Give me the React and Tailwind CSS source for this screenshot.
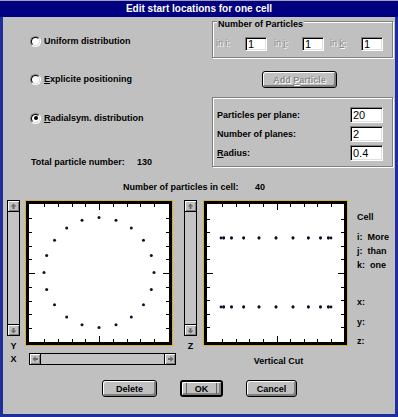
import React from "react";

function ticks(W, H, cx, cy, s) {
  const out = [];
  for (let k = -4; k <= 4; k++) {
    const len = k === 0 ? 6 : 3;
    const x = Math.round(cx + k * s) + 0.5;
    const y = Math.round(cy + k * s) + 0.5;
    out.push(<line key={"t" + k} x1={x} y1={0} x2={x} y2={len} />);
    out.push(<line key={"b" + k} x1={x} y1={H - len} x2={x} y2={H} />);
    out.push(<line key={"l" + k} x1={0} y1={y} x2={len} y2={y} />);
    out.push(<line key={"r" + k} x1={W - len} y1={y} x2={W} y2={y} />);
  }
  return out;
}

function Plot({ outer, W, H, cx, cy, s, children }) {
  return (
    <div className={"border border-[#d8b038] " + outer}>
      <div className="border-[3px] border-black bg-white w-full h-full">
        <svg width={W} height={H} className="block">
          <g stroke="#000" strokeWidth="1" shapeRendering="crispEdges">
            {ticks(W, H, cx, cy, s)}
          </g>
          {children}
        </svg>
      </div>
    </div>
  );
}

function Radio({ checked, children, className }) {
  return (
    <div className={"flex items-center h-[12px] " + className}>
      <div className="w-[11px] h-[11px] rounded-full border border-t-[#808080] border-l-[#808080] border-r-white border-b-white flex items-center justify-center shrink-0">
        <div className="w-[9px] h-[9px] rounded-full border border-t-black border-l-black border-r-[#dfdfdf] border-b-[#dfdfdf] bg-white flex items-center justify-center">
          {checked && <div className="w-[4px] h-[4px] rounded-full bg-black" />}
        </div>
      </div>
      <span className="ml-[3px] leading-[12px]">{children}</span>
    </div>
  );
}

function Field({ className, children }) {
  return (
    <div
      className={
        "bg-white border border-t-[#808080] border-l-[#808080] border-r-white border-b-white shadow-[inset_1px_1px_0_#000,inset_-1px_-1px_0_#dfdfdf] flex items-center pl-[2px] text-[11px] font-normal leading-[11px] text-black " +
        className
      }
    >
      {children}
    </div>
  );
}

function Button({ className, children, def }) {
  return (
    <div
      className={
        (def ? "border-2 " : "border ") +
        "border-black rounded-[3px] bg-[#c0c0c0] shadow-[inset_1px_1px_0_#fff,inset_-2px_-2px_0_#808080] flex items-center justify-center leading-[10px] " +
        className
      }
    >
      <span>{children}</span>
    </div>
  );
}

function Arrow({ dir }) {
  const d = {
    up: "M5.5 2.5 L8.5 5.5 L6.5 5.5 L6.5 8 L4.5 8 L4.5 5.5 L2.5 5.5 Z",
    down: "M5.5 8.5 L8.5 5.5 L6.5 5.5 L6.5 3 L4.5 3 L4.5 5.5 L2.5 5.5 Z",
    left: "M2.5 5 L5.5 2 L5.5 4 L8 4 L8 6 L5.5 6 L5.5 8 Z",
    right: "M8.5 5 L5.5 2 L5.5 4 L3 4 L3 6 L5.5 6 L5.5 8 Z",
  }[dir];
  return (
    <svg width="11" height="11" className="block">
      <path d={d} fill="#6a6a6a" />
    </svg>
  );
}

function VScroll() {
  return (
    <div className="w-[13px] h-[136px] border border-black bg-[#c4c4c4] flex flex-col justify-between">
      <div className="h-[11px] border-b border-black bg-[#c0c0c0] shadow-[inset_1px_1px_0_#fff,inset_-1px_-1px_0_#808080] flex items-center justify-center overflow-hidden">
        <Arrow dir="up" />
      </div>
      <div className="h-[11px] border-t border-black bg-[#c0c0c0] shadow-[inset_1px_1px_0_#fff,inset_-1px_-1px_0_#808080] flex items-center justify-center overflow-hidden">
        <Arrow dir="down" />
      </div>
    </div>
  );
}

function HScroll() {
  return (
    <div className="w-[147px] h-[12px] border border-black bg-[#c4c4c4] flex justify-between">
      <div className="w-[11px] border-r border-black bg-[#c0c0c0] shadow-[inset_1px_1px_0_#fff,inset_-1px_-1px_0_#808080] flex items-center justify-center overflow-hidden">
        <Arrow dir="left" />
      </div>
      <div className="w-[11px] border-l border-black bg-[#c0c0c0] shadow-[inset_1px_1px_0_#fff,inset_-1px_-1px_0_#808080] flex items-center justify-center overflow-hidden">
        <Arrow dir="right" />
      </div>
    </div>
  );
}

export default function App() {
  const pts = [];
  for (let k = 0; k < 20; k++) {
    const a = (k * 18 * Math.PI) / 180;
    pts.push([Math.sin(a), Math.cos(a)]);
  }
  return (
    <div className="w-[398px] h-[417px] bg-[#1e2f9a] flex flex-col font-['Liberation_Sans',Arial,sans-serif] text-[9px] font-bold text-black">
      <div className="h-[17px] bg-[#000080] border-t border-[#a0a0b0] flex items-center justify-center text-white text-[10px] font-bold leading-[12px]">
        Edit start locations for one cell
      </div>
      <div className="flex-1 bg-[#c0c0c0] ml-[3px] mr-[3px] mb-[3px] flex flex-col">
        {/* top section */}
        <div className="flex h-[151px]">
          <div className="w-[209px] pl-[27px] pt-[18px] flex flex-col">
            <Radio>Uniform distribution</Radio>
            <Radio className="mt-[26px]">
              <u>E</u>xplicite positioning
            </Radio>
            <Radio className="mt-[27px]" checked>
              <u>R</u>adialsym. distribution
            </Radio>
            <div className="mt-[32px] ml-[1px] flex h-[12px] items-center leading-[12px]">
              <span className="w-[106px]">Total particle number:</span>
              <span>130</span>
            </div>
          </div>
          <div className="w-[181px] pt-[4px] flex flex-col">
            <div className="h-[37px] border border-[#808080] shadow-[inset_1px_1px_0_#fff,1px_1px_0_#fff] flex flex-col">
              <div className="-mt-[3px] ml-[4px] w-fit bg-[#c0c0c0] px-[1px] leading-[10px]">
                Number of Particles
              </div>
              <div className="mt-[8px] pl-[3px] flex items-center text-[#8a8a8a] font-normal [text-shadow:1px_1px_0_#fff]">
                <span className="w-[29px]">in i:</span>
                <Field className="w-[22px] h-[14px]">1</Field>
                <span className="ml-[7px] w-[28px]">
                  in <u>j</u>:
                </span>
                <Field className="w-[22px] h-[14px]">1</Field>
                <span className="ml-[6px] w-[31px]">
                  in <u>k</u>:
                </span>
                <Field className="w-[22px] h-[14px]">1</Field>
              </div>
            </div>
            <Button className="mt-[13px] ml-[50px] w-[75px] h-[17px] text-[#8a8a8a] [text-shadow:1px_1px_0_#fff]">
              Add <u>P</u>article
            </Button>
            <div className="mt-[9px] h-[70px] border border-[#808080] shadow-[inset_1px_1px_0_#fff,1px_1px_0_#fff] pt-[9px] pl-[4px] pr-[9px] flex flex-col gap-[3px]">
              <div className="flex items-center justify-between h-[16px]">
                <span className="mt-[2px]">Particles per plane:</span>
                <Field className="w-[33px] h-[16px]">20</Field>
              </div>
              <div className="flex items-center justify-between h-[16px]">
                <span className="mt-[2px]">Number of planes:</span>
                <Field className="w-[33px] h-[16px]">2</Field>
              </div>
              <div className="flex items-center justify-between h-[16px]">
                <span className="mt-[2px]">
                  <u>R</u>adius:
                </span>
                <Field className="w-[33px] h-[16px]">0.4</Field>
              </div>
            </div>
          </div>
        </div>

        {/* particles in cell */}
        <div className="mt-[13px] h-[12px] pl-[120px] flex items-center leading-[12px]">
          <span className="w-[132px]">Number of particles in cell:</span>
          <span>40</span>
        </div>

        {/* plot row */}
        <div className="mt-[7px] h-[153px] flex items-start">
          <div className="ml-[4px] w-[13px] flex flex-col items-center">
            <VScroll />
            <span className="mt-[5px] leading-[10px]">Y</span>
          </div>
          <Plot outer="ml-[5px] w-[148px] h-[146px]" W={140} H={138} cx={70} cy={69} s={13.75}>
            {pts.map(([sx, cy], i) => (
              <circle key={i} cx={70 + 55 * sx} cy={68.5 - 55 * cy} r="1.5" fill="#101028" />
            ))}
          </Plot>
          <div className="ml-[11px] w-[13px] flex flex-col items-center">
            <VScroll />
            <span className="mt-[5px] leading-[10px]">Z</span>
          </div>
          <Plot outer="ml-[6px] w-[145px] h-[146px]" W={137} H={138} cx={69.5} cy={69} s={13.6}>
            {pts.map(([sx], i) => (
              <React.Fragment key={i}>
                <circle cx={69 + 55 * sx} cy={34} r="1.4" fill="#101028" />
                <circle cx={69 + 55 * sx} cy={103} r="1.4" fill="#101028" />
              </React.Fragment>
            ))}
          </Plot>
          <div className="ml-[9px] flex flex-col leading-[12px]">
            <span className="mt-[11px]">Cell</span>
            <span className="mt-[8px]">
              i:<span className="ml-[5px]">More</span>
            </span>
            <span className="mt-[2px]">
              j:<span className="ml-[5px]">than</span>
            </span>
            <span className="mt-[2px]">
              k:<span className="ml-[5px]">one</span>
            </span>
            <span className="mt-[25px]">x:</span>
            <span className="mt-[8px]">y:</span>
            <span className="mt-[7px]">z:</span>
          </div>
        </div>

        {/* X scroll row */}
        <div className="h-[12px] flex items-center">
          <span className="ml-[4px] w-[13px] text-center leading-[10px]">X</span>
          <div className="ml-[9px]">
            <HScroll />
          </div>
          <span className="ml-[30px] w-[145px] text-center leading-[12px] mt-[3px]">Vertical Cut</span>
        </div>

        {/* buttons */}
        <div className="mt-[15px] flex">
          <Button className="ml-[99px] w-[55px] h-[17px]">Delete</Button>
          <Button def className="ml-[23px] w-[43px] h-[17px]">
            <span className="flex items-center justify-center w-[31px] h-[11px] border-x border-[#606060]">OK</span>
          </Button>
          <Button className="ml-[23px] w-[51px] h-[17px]">Cancel</Button>
        </div>
      </div>
    </div>
  );
}
